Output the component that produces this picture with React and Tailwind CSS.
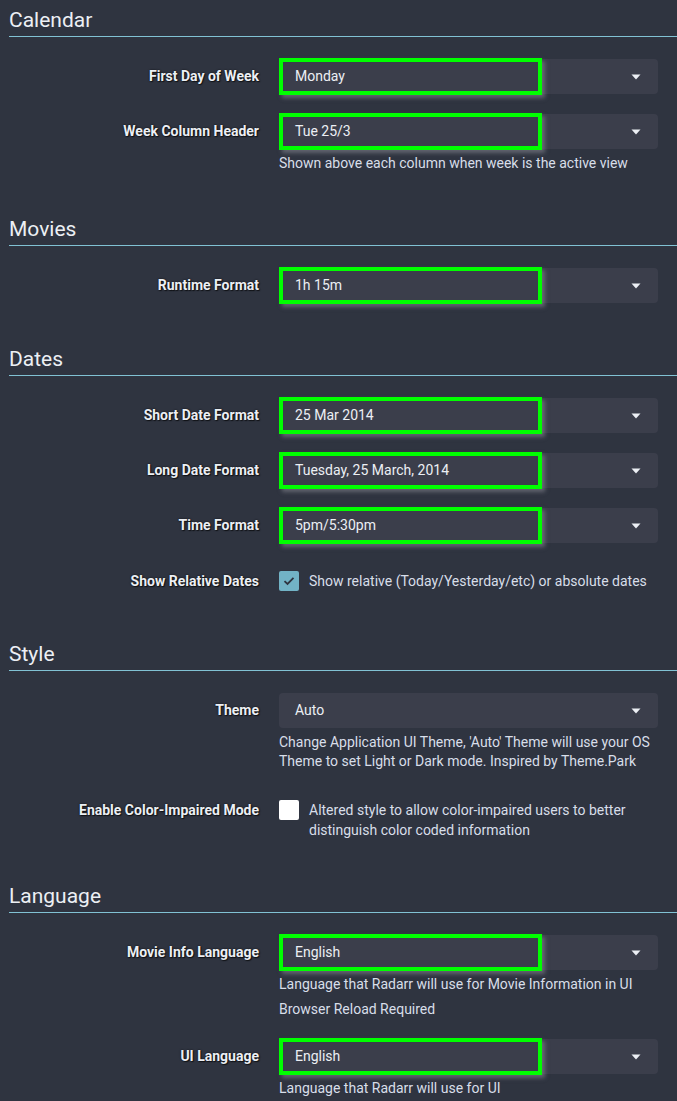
import React from "react";

const font = { fontFamily: "Roboto, 'Noto Sans', Arial, sans-serif" };

function Header({ children }) {
  return (
    <div className="h-[37px] border-b border-[#81c2d4] pt-[5px] text-[21px] leading-[30px] text-[#eceff4]">
      {children}
    </div>
  );
}

function Label({ children, pt = "pt-[7px]" }) {
  return (
    <div
      className={`w-[250px] shrink-0 text-right text-[14px] font-bold leading-[20px] text-[#eceff4] ${pt}`}
      style={{ textShadow: "0 0 2px rgba(0,0,0,0.8), 1px 1px 1px rgba(0,0,0,0.6)" }}
    >
      {children}
    </div>
  );
}

function Select({ value, highlight }) {
  return (
    <div className="relative flex h-[35px] w-full items-center rounded-[4px] bg-[#3b3e4b] pl-4 pr-[17px] text-[14px] text-[#eceff4]">
      <span className="flex-1">{value}</span>
      <svg width="10" height="6" viewBox="0 0 10 6" className="mt-[1px]">
        <path d="M0.5 0.5 L9.5 0.5 L5 5.5 Z" fill="#eceff4" />
      </svg>
      {highlight && (
        <div className="pointer-events-none absolute left-0 top-[-1px] h-[37px] w-[263px] border-4 border-[#00ff00] shadow-[3px_3px_4px_rgba(140,140,150,0.55)]" />
      )}
    </div>
  );
}

function Help({ children, mt = "mt-[5px]" }) {
  return <div className={`${mt} text-[14px] leading-[19px] text-[#d8dee9]`}>{children}</div>;
}

function SelectRow({ label, value, highlight, help, extra }) {
  return (
    <div className="mb-5 flex gap-5 pr-[19px]">
      <Label>{label}</Label>
      <div className="min-w-0 flex-1">
        <Select value={value} highlight={highlight} />
        {help && <Help>{help}</Help>}
        {extra && <Help mt="mt-[6px]">{extra}</Help>}
      </div>
    </div>
  );
}

function Check({ checked }) {
  return checked ? (
    <div className="flex h-5 w-5 shrink-0 items-center justify-center rounded-[2px] bg-[#72b3c6]">
      <svg width="12" height="10" viewBox="0 0 12 10">
        <path d="M1.5 5.2 L4.5 8 L10.5 1.8" fill="none" stroke="#2e3440" strokeWidth="1.8" />
      </svg>
    </div>
  ) : (
    <div className="h-5 w-5 shrink-0 rounded-[2px] bg-white" />
  );
}

function CheckRow({ label, checked, text }) {
  return (
    <div className="mb-5 flex gap-5 pr-[19px] pt-[9px]">
      <Label pt="pt-0">{label}</Label>
      <div className="flex min-w-0 flex-1 items-start gap-[10px]">
        <Check checked={checked} />
        <div className="text-[14px] leading-[20px] text-[#d8dee9]">{text}</div>
      </div>
    </div>
  );
}

function Section({ title, children }) {
  return (
    <div className="flex flex-col pb-4">
      <Header>{title}</Header>
      <div className="flex flex-col pt-[22px]">{children}</div>
    </div>
  );
}

export default function App() {
  return (
    <div className="min-h-[1101px] w-full bg-[#2f3440] pl-[9px]" style={font}>
      <Section title="Calendar">
        <SelectRow label="First Day of Week" value="Monday" highlight />
        <SelectRow
          label="Week Column Header"
          value="Tue 25/3"
          highlight
          help="Shown above each column when week is the active view"
        />
      </Section>
      <Section title="Movies">
        <SelectRow label="Runtime Format" value="1h 15m" highlight />
      </Section>
      <Section title="Dates">
        <SelectRow label="Short Date Format" value="25 Mar 2014" highlight />
        <SelectRow label="Long Date Format" value="Tuesday, 25 March, 2014" highlight />
        <SelectRow label="Time Format" value="5pm/5:30pm" highlight />
        <div className="mb-5 flex h-[35px] items-center gap-5 pr-[19px]">
          <Label pt="pt-0">Show Relative Dates</Label>
          <div className="flex flex-1 items-center gap-[10px]">
            <Check checked />
            <div className="text-[14px] leading-[20px] text-[#d8dee9]">
              Show relative (Today/Yesterday/etc) or absolute dates
            </div>
          </div>
        </div>
      </Section>
      <Section title="Style">
        <SelectRow
          label="Theme"
          value="Auto"
          help="Change Application UI Theme, 'Auto' Theme will use your OS Theme to set Light or Dark mode. Inspired by Theme.Park"
        />
        <CheckRow
          label="Enable Color-Impaired Mode"
          text="Altered style to allow color-impaired users to better distinguish color coded information"
        />
      </Section>
      <Section title="Language">
        <SelectRow
          label="Movie Info Language"
          value="English"
          highlight
          help="Language that Radarr will use for Movie Information in UI"
          extra="Browser Reload Required"
        />
        <SelectRow
          label="UI Language"
          value="English"
          highlight
          help="Language that Radarr will use for UI"
        />
      </Section>
    </div>
  );
}
